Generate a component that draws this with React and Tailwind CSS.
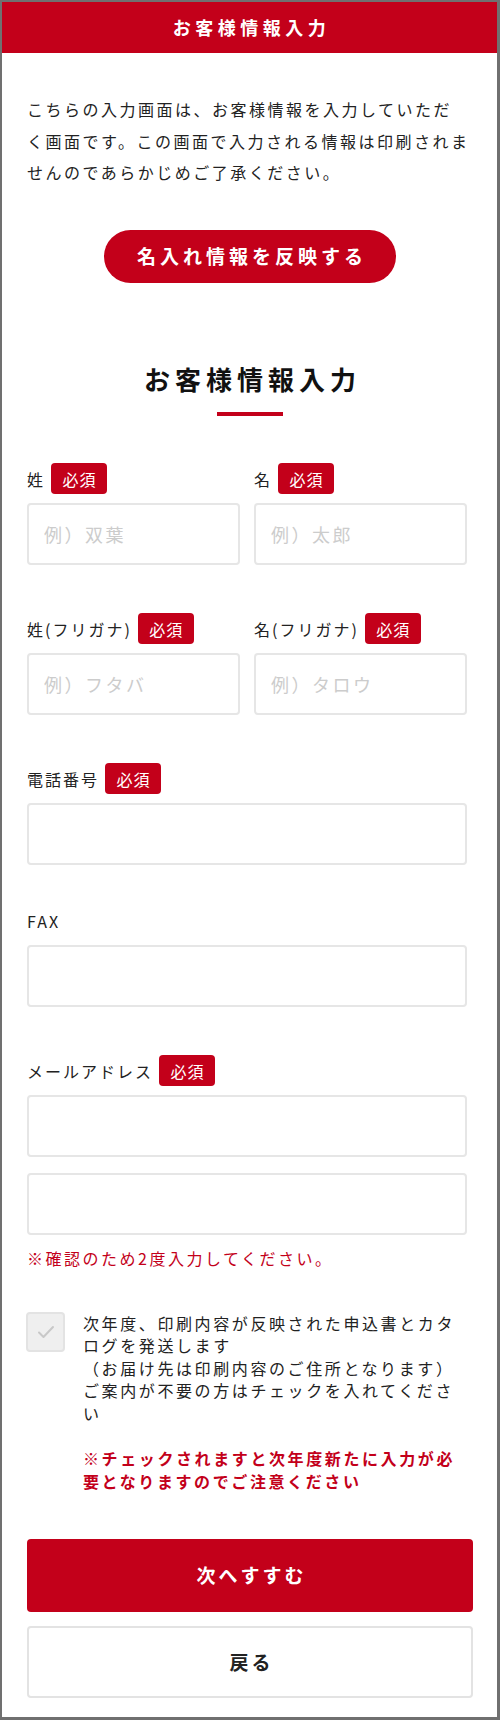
import React from "react";

function Badge() {
  return (
    <span className="ml-[6px] inline-flex h-[31px] w-[56px] items-center justify-center rounded-[4px] bg-[#c3001a] pl-[1px] text-[16px] tracking-[1px] text-white">
      必須
    </span>
  );
}

function Label({ children, required }) {
  return (
    <div className="flex h-[32px] items-center">
      <span className="text-[16px] tracking-[2px] text-[#222]">{children}</span>
      {required && <Badge />}
    </div>
  );
}

function Field({ placeholder, className = "" }) {
  return (
    <input
      type="text"
      placeholder={placeholder}
      className={`block h-[62px] w-full rounded-[4px] border-2 border-[#e6e6e6] bg-white px-[15px] text-[18px] tracking-[2.5px] text-[#222] outline-none placeholder:text-[#cccccc] ${className}`}
    />
  );
}

export default function App() {
  return (
    <div className="h-[1720px] w-[500px] border-t-2 border-l-2 border-r-[3px] border-b-[3px] border-[#707070] bg-white font-['Noto_Sans_CJK_JP','Noto_Sans',sans-serif] text-[#222]">
      <header className="flex h-[51px] items-center justify-center bg-[#c3001a] pl-[4px] text-[18px] font-bold tracking-[4.5px] text-white">
        お客様情報入力
      </header>

      <main className="pl-[25px] pr-[24px]">
        <p className="mt-[41px] whitespace-nowrap text-[16px] leading-[31.5px] tracking-[2.5px] text-[#222]">
          こちらの入力画面は、お客様情報を入力していただ
          <br />
          く画面です。この画面で入力される情報は印刷されま
          <br />
          せんのであらかじめご了承ください。
        </p>

        <div className="mt-[41px] flex justify-center">
          <button className="flex h-[53px] w-[292px] items-center justify-center rounded-full bg-[#c3001a] pl-[4px] text-[19px] font-bold tracking-[4px] text-white">
            名入れ情報を反映する
          </button>
        </div>

        <h1 className="mt-[76px] flex h-[40px] items-center justify-center pl-[5px] text-[26px] font-bold leading-[40px] tracking-[5px] text-[#111]">
          お客様情報入力
        </h1>
        <div className="mx-auto mt-[13px] h-[4px] w-[66px] bg-[#c3001a]" />

        <div className="mr-[6px] mt-[47px] grid grid-cols-2 gap-x-[14px]">
          <div>
            <Label required>姓</Label>
            <Field placeholder="例）双葉" className="mt-[8px]" />
          </div>
          <div>
            <Label required>名</Label>
            <Field placeholder="例）太郎" className="mt-[8px]" />
          </div>
        </div>

        <div className="mr-[6px] mt-[48px] grid grid-cols-2 gap-x-[14px]">
          <div>
            <Label required>姓(フリガナ)</Label>
            <Field placeholder="例）フタバ" className="mt-[8px]" />
          </div>
          <div>
            <Label required>名(フリガナ)</Label>
            <Field placeholder="例）タロウ" className="mt-[8px]" />
          </div>
        </div>

        <div className="mr-[6px] mt-[48px]">
          <Label required>電話番号</Label>
          <Field className="mt-[8px]" />
        </div>

        <div className="mr-[6px] mt-[40px]">
          <Label>FAX</Label>
          <Field className="mt-[8px]" />
        </div>

        <div className="mr-[6px] mt-[48px]">
          <Label required>メールアドレス</Label>
          <Field className="mt-[8px]" />
          <Field className="mt-[16px]" />
          <p className="mt-[11px] whitespace-nowrap text-[16px] leading-[24px] tracking-[2.5px] text-[#c3001a]">
            ※確認のため2度入力してください。
          </p>
        </div>

        <div className="mt-[42px] flex items-start">
          <div className="ml-[-1px] flex h-[40px] w-[39px] shrink-0 items-center justify-center rounded-[4px] border-2 border-[#e3e3e3] bg-[#efefef]">
            <svg width="18" height="14" viewBox="0 0 18 14" fill="none">
              <path d="M2 7.5 L6.5 12 L16 2" stroke="#c8c8c8" strokeWidth="2" strokeLinecap="round" strokeLinejoin="round" />
            </svg>
          </div>
          <div className="ml-[18px]">
            <p className="whitespace-nowrap text-[16px] leading-[22.5px] tracking-[2.6px] text-[#222]">
              次年度、印刷内容が反映された申込書とカタ
              <br />
              ログを発送します
              <br />
              （お届け先は印刷内容のご住所となります）
              <br />
              ご案内が不要の方はチェックを入れてくださ
              <br />い
            </p>
            <p className="mt-[23px] whitespace-nowrap text-[16px] font-bold leading-[22.5px] tracking-[2.6px] text-[#c3001a]">
              ※チェックされますと次年度新たに入力が必
              <br />
              要となりますのでご注意ください
            </p>
          </div>
        </div>

        <button className="mt-[47px] flex h-[73px] w-full items-center justify-center rounded-[4px] bg-[#c3001a] pl-[3px] text-[19px] font-bold tracking-[3px] text-white">
          次へすすむ
        </button>
        <button className="mt-[14px] flex h-[72px] w-full items-center justify-center rounded-[4px] border-2 border-[#e3e3e3] bg-white pl-[3px] text-[19px] font-bold tracking-[3px] text-[#222]">
          戻る
        </button>
      </main>
    </div>
  );
}
